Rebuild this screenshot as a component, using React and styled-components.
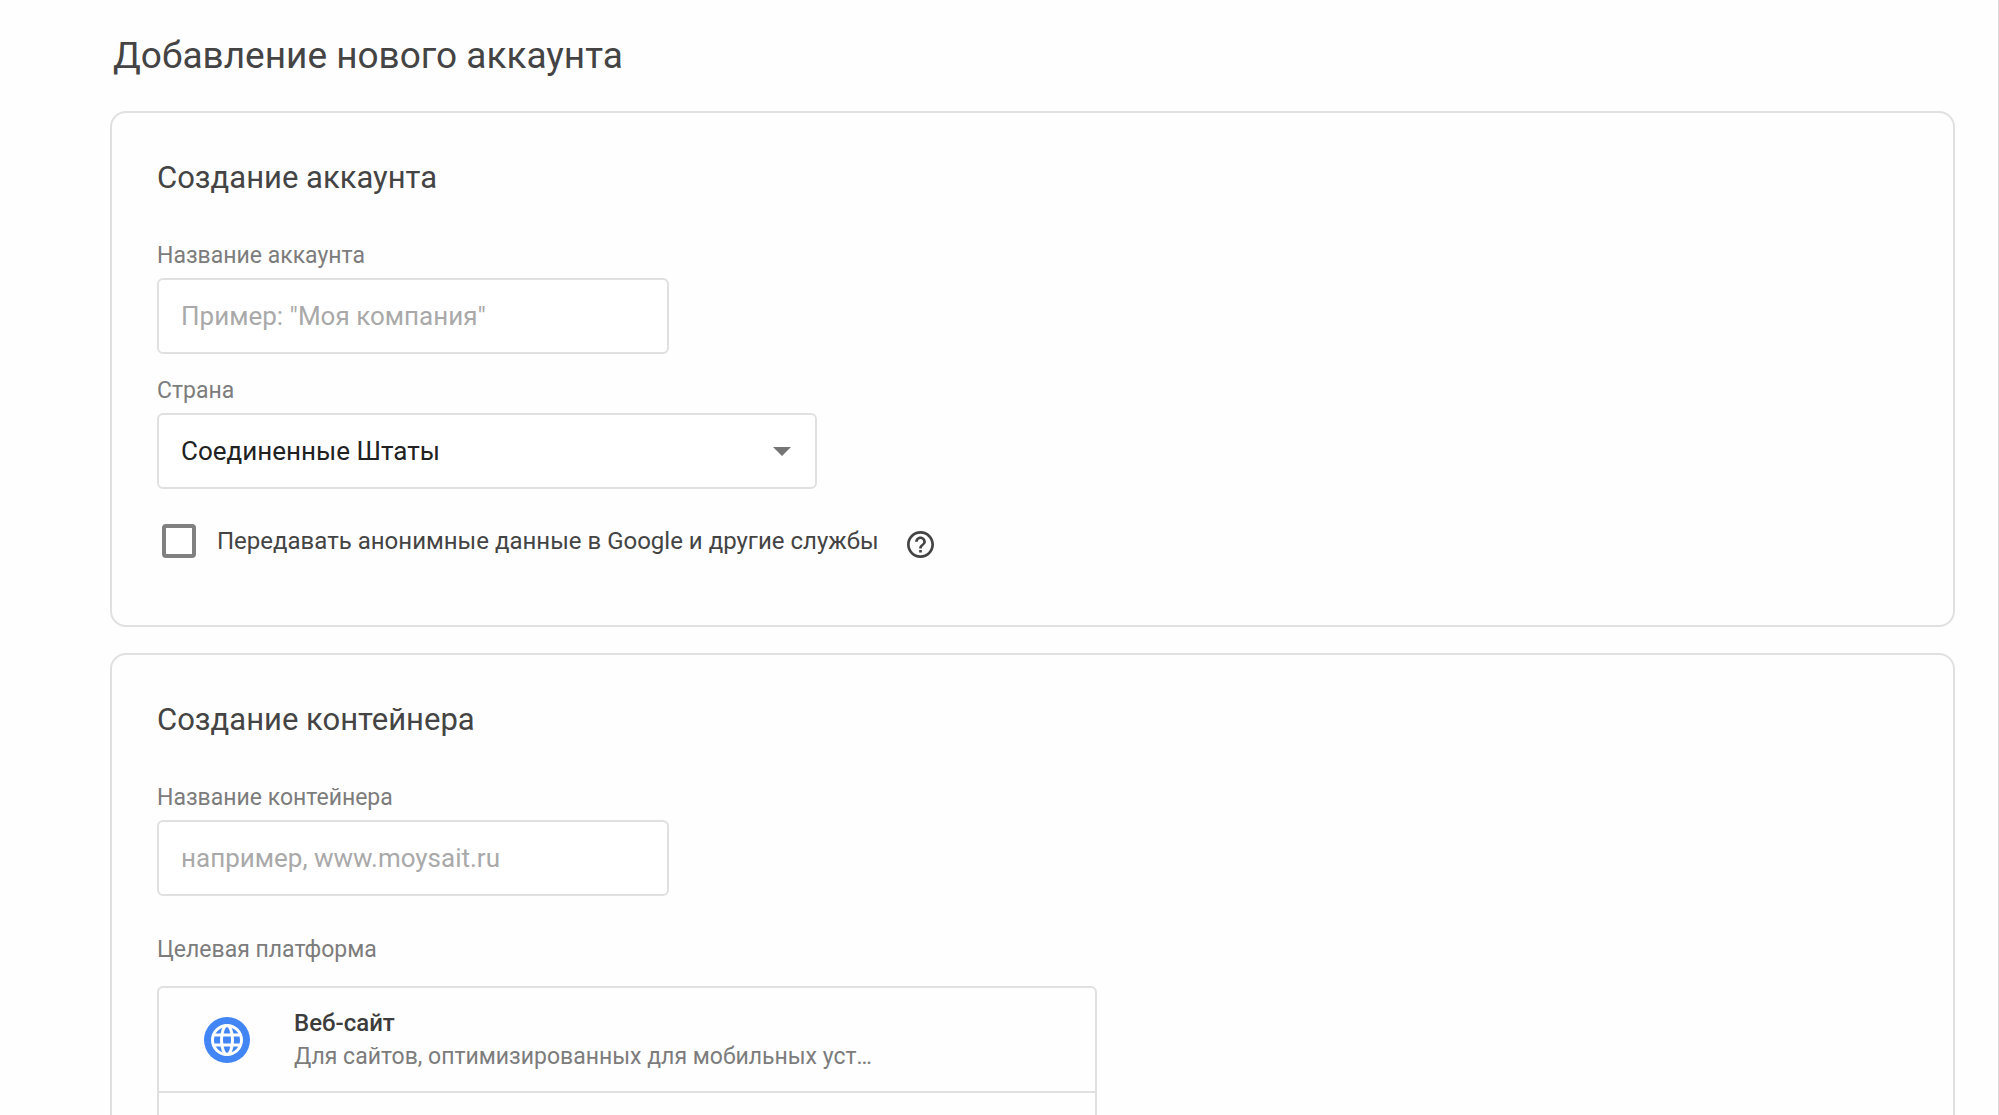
import { useState } from "react";
import styled, { createGlobalStyle } from "styled-components";

const GlobalStyle = createGlobalStyle`
  * {
    box-sizing: border-box;
  }
  body {
    margin: 0;
    background: #fefefe;
    color: #3c4043;
    font-family: Roboto, "Liberation Sans", sans-serif;
  }
`;

const Page = styled.main`
  height: 100vh;
  overflow: hidden;
  padding: 32px 43px 0 110px;
  border-right: 1px solid #dadada;
`;

const Title = styled.h1`
  margin: 0 0 31px;
  padding-left: 3px;
  font-weight: 400;
  font-size: 37px;
  line-height: 48px;
  color: #444;
`;

const Card = styled.section`
  margin-bottom: 26px;
  padding: 45px 45px 67px;
  border: 2px solid #e0e0e0;
  border-radius: 16px;
`;

const Heading = styled.h2`
  margin: 0 0 44px;
  font-weight: 400;
  font-size: 31px;
  line-height: 40px;
  color: #444;
`;

const Field = styled.div`
  display: flex;
  flex-direction: column;
  align-items: flex-start;
  gap: ${(props) => props.$gap || 8}px;
  margin-bottom: ${(props) => props.$space || 23}px;
`;

const Label = styled.label`
  font-size: 23px;
  line-height: 28px;
  color: #7c7c7c;
`;

const Input = styled.input`
  width: 512px;
  max-width: 100%;
  height: 76px;
  padding: 0 22px;
  border: 2px solid #e0e0e0;
  border-radius: 6px;
  background: #fff;
  font-family: inherit;
  font-size: 26px;
  color: #212121;
  &::placeholder {
    color: #a9a9a9;
    opacity: 1;
  }
`;

const SelectWrap = styled.div`
  position: relative;
  width: 660px;
  max-width: 100%;
`;

const Select = styled.select`
  display: block;
  width: 100%;
  height: 76px;
  padding: 0 60px 0 22px;
  border: 2px solid #e0e0e0;
  border-radius: 6px;
  background: #fff;
  appearance: none;
  font-family: inherit;
  font-size: 26px;
  color: #212121;
`;

const Arrow = styled.svg`
  position: absolute;
  top: 34px;
  right: 26px;
  pointer-events: none;
`;

const CheckRow = styled.div`
  display: flex;
  align-items: center;
  margin-top: 34px;
  padding-left: 5px;
`;

const Checkbox = styled.input`
  appearance: none;
  width: 34px;
  height: 34px;
  margin: 0 21px 0 0;
  border: 4px solid #808080;
  border-radius: 4px;
  background: #fff;
  &:checked {
    border-color: #4285f4;
    background: #4285f4;
  }
`;

const CheckLabel = styled.label`
  font-size: 24px;
  line-height: 34px;
  color: #444;
`;

const HelpButton = styled.button`
  display: flex;
  margin: 8px 0 0 28px;
  padding: 0;
  border: 0;
  background: none;
  color: #444;
  cursor: pointer;
`;

const PlatformLabel = styled.div`
  font-size: 23px;
  line-height: 28px;
  color: #7c7c7c;
`;

const PlatformList = styled.ul`
  width: 940px;
  max-width: 100%;
  margin: 0;
  padding: 0;
  border: 2px solid #e0e0e0;
  border-radius: 6px;
  list-style: none;
`;

const PlatformItem = styled.li`
  min-height: 103px;
  & + & {
    border-top: 2px solid #e0e0e0;
  }
`;

const PlatformButton = styled.button`
  display: flex;
  align-items: center;
  gap: 44px;
  width: 100%;
  padding: 19px 45px 18px;
  border: 0;
  background: none;
  font-family: inherit;
  text-align: left;
  cursor: pointer;
`;

const PlatformText = styled.span`
  display: flex;
  flex-direction: column;
  min-width: 0;
`;

const PlatformName = styled.span`
  font-weight: 500;
  font-size: 24px;
  line-height: 33px;
  color: #3c3c3c;
`;

const PlatformInfo = styled.span`
  font-size: 23px;
  line-height: 33px;
  color: #7c7c7c;
`;

function HelpIcon() {
  return (
    <svg width="27" height="27" viewBox="2 2 20 20" fill="currentColor">
      <path d="M11 18h2v-2h-2v2zm1-16C6.48 2 2 6.48 2 12s4.480 10 10 10 10-4.480 10-10S17.520 2 12 2zm0 18c-4.410 0-8-3.590-8-8s3.590-8 8-8 8 3.590 8 8-3.590 8-8 8zm0-14c-2.210 0-4 1.790-4 4h2c0-1.100.9-2 2-2s2 .9 2 2c0 2-3 1.750-3 5h2c0-2.250 3-2.500 3-5 0-2.210-1.790-4-4-4z" />
    </svg>
  );
}

function GlobeIcon() {
  return (
    <svg width="46" height="46" viewBox="0 0 46 46" fill="none">
      <circle cx="23" cy="23" r="23" fill="#4285f4" />
      <g stroke="#fff" strokeWidth="3">
        <circle cx="23" cy="23" r="14.500" />
        <ellipse cx="23" cy="23" rx="5.500" ry="14.500" />
        <path d="M10 18h26M10 28h26" />
      </g>
    </svg>
  );
}

function App() {
  const [share, setShare] = useState(false);

  return (
    <>
      <GlobalStyle />
      <Page>
        <Title>Добавление нового аккаунта</Title>

        <Card>
          <Heading>Создание аккаунта</Heading>
          <Field>
            <Label htmlFor="account">Название аккаунта</Label>
            <Input id="account" placeholder={'Пример: "Моя компания"'} />
          </Field>
          <Field>
            <Label htmlFor="country">Страна</Label>
            <SelectWrap>
              <Select id="country" defaultValue="us">
                <option value="us">Соединенные Штаты</option>
              </Select>
              <Arrow width="18" height="9" viewBox="0 0 18 9">
                <path d="M0 0h18L9 9z" fill="#757575" />
              </Arrow>
            </SelectWrap>
          </Field>
          <CheckRow>
            <Checkbox
              id="share"
              type="checkbox"
              checked={share}
              onChange={(e) => setShare(e.target.checked)}
            />
            <CheckLabel htmlFor="share">
              Передавать анонимные данные в Google и другие службы
            </CheckLabel>
            <HelpButton type="button" aria-label="Справка">
              <HelpIcon />
            </HelpButton>
          </CheckRow>
        </Card>

        <Card>
          <Heading>Создание контейнера</Heading>
          <Field $space={40}>
            <Label htmlFor="container">Название контейнера</Label>
            <Input id="container" placeholder="например, www.moysait.ru" />
          </Field>
          <Field $gap={22}>
            <PlatformLabel id="platform">Целевая платформа</PlatformLabel>
            <PlatformList aria-labelledby="platform">
              <PlatformItem>
                <PlatformButton type="button">
                  <GlobeIcon />
                  <PlatformText>
                    <PlatformName>Веб-сайт</PlatformName>
                    <PlatformInfo>
                      Для сайтов, оптимизированных для мобильных уст…
                    </PlatformInfo>
                  </PlatformText>
                </PlatformButton>
              </PlatformItem>
              <PlatformItem />
            </PlatformList>
          </Field>
        </Card>
      </Page>
    </>
  );
}

export default App;
